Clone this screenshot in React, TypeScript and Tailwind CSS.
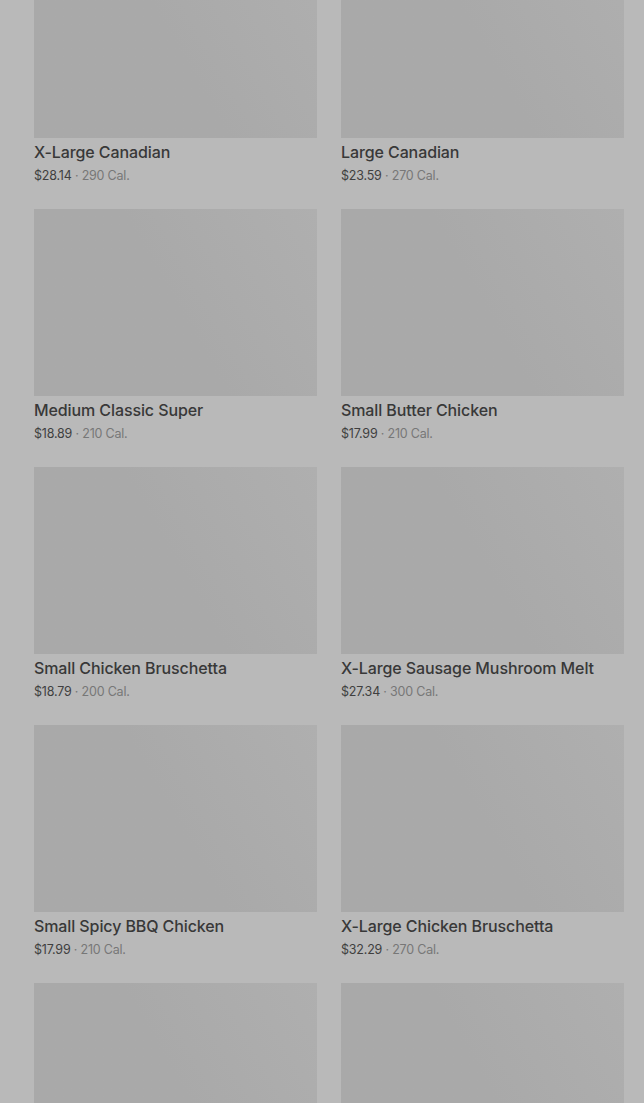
import React from 'react';

const items = [
  { name: 'X-Large Canadian', price: '$28.14', cal: '290 Cal.' },
  { name: 'Large Canadian', price: '$23.59', cal: '270 Cal.' },
  { name: 'Medium Classic Super', price: '$18.89', cal: '210 Cal.' },
  { name: 'Small Butter Chicken', price: '$17.99', cal: '210 Cal.' },
  { name: 'Small Chicken Bruschetta', price: '$18.79', cal: '200 Cal.' },
  { name: 'X-Large Sausage Mushroom Melt', price: '$27.34', cal: '300 Cal.' },
  { name: 'Small Spicy BBQ Chicken', price: '$17.99', cal: '210 Cal.' },
  { name: 'X-Large Chicken Bruschetta', price: '$32.29', cal: '270 Cal.' },
  { name: 'Medium Canadian', price: '$20.49', cal: '250 Cal.' },
  { name: 'Large Butter Chicken', price: '$24.99', cal: '260 Cal.' },
];

const App: React.FC = () => {
  return (
    <div className="h-screen overflow-hidden bg-[#b9b9b9] font-['Inter',sans-serif]">
      <div className="-mt-[49px] pl-[34px] pr-[20px] grid grid-cols-2 gap-x-6 gap-y-[23px]">
        {items.map((item, index) => (
          <div key={index}>
            {/* placeholder image */}
            <div className="h-[187px] bg-linear-60 from-[#a9a9a9] from-50% to-[#afafaf]"></div>
            <h3 className="mt-[2px] text-[16px] leading-6 font-medium text-[#383838] tracking-[-0.1px]">{item.name}</h3>
            <p className="mt-[2px] text-[12.5px] leading-5 tracking-[-0.2px] text-[#3f3f3f]">
              {item.price}
              <span className="text-[#777777]"> · {item.cal}</span>
            </p>
          </div>
        ))}
      </div>
    </div>
  );
};

export default App;
